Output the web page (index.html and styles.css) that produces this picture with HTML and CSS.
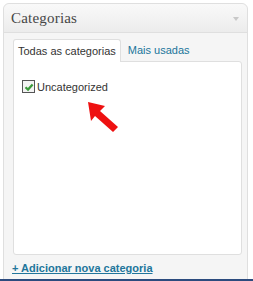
FILE: index.html
```html
<!DOCTYPE html>
<html>
<head>
<meta charset="utf-8">
<link rel="stylesheet" href="styles.css">
</head>
<body>
<div class="postbox">
  <div class="hdr">
    <h3>Categorias</h3>
    <span class="toggle"></span>
  </div>
  <div class="inside">
    <ul class="tabs">
      <li class="tab active">Todas as categorias</li>
      <li class="tab"><a href="#">Mais usadas</a></li>
    </ul>
    <div class="panel">
      <label class="cat"><span class="cb"><svg width="10" height="10" viewBox="0 0 10 10"><path d="M1.5 5.2 L4 7.6 L8.6 2.4" fill="none" stroke="#3a9a3a" stroke-width="2.2"/></svg></span>Uncategorized</label>
      <svg class="arrow" width="40" height="40" viewBox="0 0 40 40"><path d="M3 3 L20 7 L15 12 L33 28 L28 33 L10 17 L6 22 Z" fill="#ee1111"/></svg>
    </div>
    <a class="add" href="#">+ Adicionar nova categoria</a>
  </div>
</div>
<div class="bar"></div>
</body>
</html>
```
FILE: styles.css
```css
html, body { margin: 0; padding: 0; background: #fff; }
body { width: 253px; height: 281px; position: relative; overflow: hidden; font-family: "Liberation Sans", Arial, sans-serif; }
.postbox {
  margin: 3px 0 0 3px;
  width: 245px;
  height: 280px;
  border: 1px solid #dfdfdf;
  border-radius: 6px 6px 0 0;
  background: #f5f5f5;
  box-sizing: border-box;
}
.hdr {
  height: 28px;
  display: flex;
  align-items: center;
  justify-content: space-between;
  padding: 0 8px 0 7px;
  background: linear-gradient(#f9f9f9, #ececec);
  border-bottom: 1px solid #dfdfdf;
  border-radius: 6px 6px 0 0;
}
.hdr h3 {
  margin: 0;
  font-family: "Liberation Serif", "Times New Roman", serif;
  font-weight: normal;
  font-size: 15px;
  color: #464646;
  letter-spacing: 0.2px;
}
.toggle {
  width: 0; height: 0;
  border-left: 3px solid transparent;
  border-right: 3px solid transparent;
  border-top: 4px solid #c8c8c8;
  margin-top: 2px;
}
.inside { padding: 6px 5px 0 9px; }
.tabs { list-style: none; margin: 0; padding: 0; display: flex; height: 22px; }
.tab {
  font-size: 11px;
  padding: 5px 5px 0 4px;
  color: #333;
  height: 22px;
  box-sizing: border-box;
  white-space: nowrap;
}
.tab.active {
  padding-right: 4px;
  background: #fff;
  border: 1px solid #dfdfdf;
  border-bottom: none;
  border-radius: 3px 3px 0 0;
  height: 23px;
  position: relative;
  z-index: 1;
}
.tab a { color: #21759b; text-decoration: none; padding-left: 3px; }
.panel {
  position: relative;
  height: 194px;
  background: #fff;
  border: 1px solid #dfdfdf;
  border-radius: 0 3px 3px 3px;
  padding: 18px 8px;
  box-sizing: border-box;
}
.cat { display: flex; align-items: center; gap: 2px; font-size: 11px; color: #333; }
.cb {
  width: 11px; height: 11px;
  border: 1px solid #555;
  background: #f3f3f3;
  display: flex; align-items: center; justify-content: center;
}
.arrow { position: absolute; left: 71px; top: 37px; }
.add {
  display: inline-block;
  margin-top: 7px;
  margin-left: -1px;
  font-size: 11px;
  font-weight: bold;
  color: #21759b;
  text-decoration: underline;
}
.bar { position: absolute; left: 0; right: 0; bottom: 0; height: 2px; background: #2c4b7e; }
```
